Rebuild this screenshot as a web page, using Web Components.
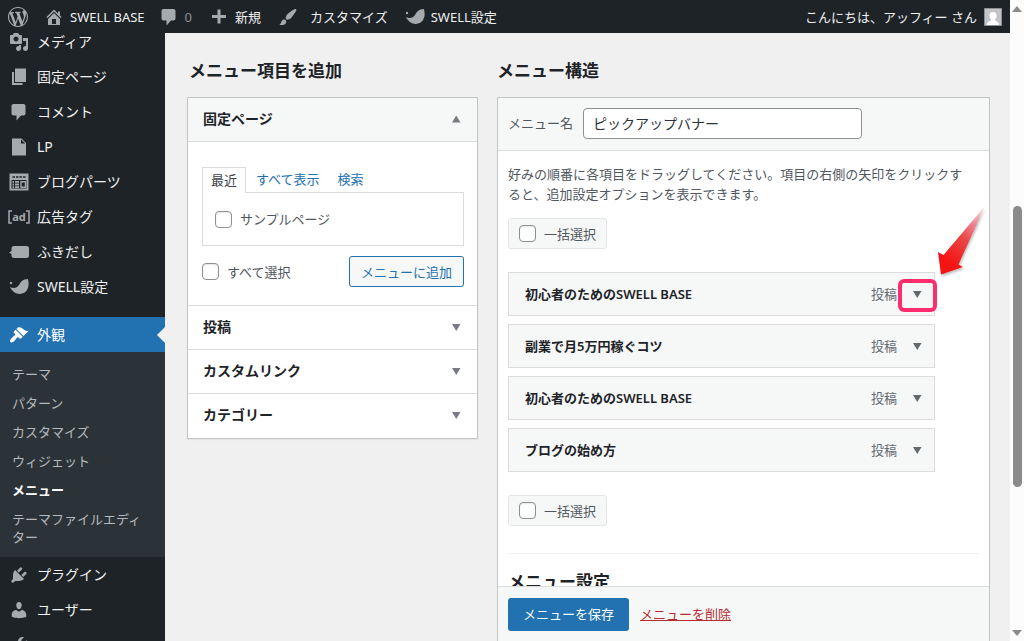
<!DOCTYPE html>
<html lang="ja">
<head>
<meta charset="utf-8">
<title>メニュー</title>
<style>
  html, body { margin: 0; height: 100%; overflow: hidden; }
  body { font: 13px/20px "Noto Sans", "Noto Sans CJK JP", sans-serif; color: #50575e; background: #f0f0f1; }
</style>
</head>
<body>
<admin-page></admin-page>
<script>
const define = (name, html, setup) => {
  const template = document.createElement('template');
  template.innerHTML = `<style>*{box-sizing:border-box}:host{box-sizing:border-box}a{color:inherit;text-decoration:none}button{font:inherit;cursor:pointer}</style>${html}`;
  customElements.define(name, class extends HTMLElement {
    constructor() {
      super();
      this.attachShadow({ mode: 'open' }).append(template.content.cloneNode(true));
    }
    connectedCallback() {
      if (setup) setup(this, this.shadowRoot);
    }
  });
};

const icons = {
  wordpress: '<path d="M20 10c0-5.510-4.490-10-10-10C4.480 0 0 4.490 0 10c0 5.520 4.480 10 10 10 5.510 0 10-4.480 10-10zM7.780 15.370L4.370 6.220c.55-.02 1.170-.08 1.170-.08.5-.06.44-1.130-.06-1.110 0 0-1.450.11-2.370.11-.18 0-.37 0-.58-.01C4.120 2.690 6.870 1.110 10 1.110c2.330 0 4.450.87 6.050 2.340-.68-.11-1.650.39-1.650 1.580 0 .74.45 1.360.9 2.100.35.61.55 1.360.55 2.460 0 1.490-1.400 5-1.400 5l-3.030-8.370c.54-.02.82-.17.82-.17.5-.05.44-1.250-.06-1.220 0 0-1.440.12-2.380.12-.87 0-2.330-.12-2.330-.12-.5-.03-.56 1.200-.06 1.220l.92.08 1.260 3.410zM17.410 10c.24-.64.74-1.870.43-4.250.7 1.290 1.050 2.710 1.050 4.250 0 3.290-1.730 6.240-4.400 7.780.97-2.590 1.940-5.200 2.920-7.780zM6.100 18.090C3.120 16.650 1.110 13.530 1.110 10c0-1.300.23-2.480.72-3.590C3.250 10.300 4.670 14.200 6.100 18.090zM10.130 11.460l2.580 6.980c-.86.29-1.760.45-2.710.45-.79 0-1.570-.11-2.290-.33.81-2.380 1.620-4.740 2.420-7.100z"/>',
  home: '<path d="M16 8.500l1.530 1.530-1.060 1.060L10 4.600l-6.470 6.490-1.060-1.060L10 2.500l4 4v-2h2v4zm-6-2.460l6 5.990V18H4v-5.970zM12 17v-5H8v5h4z"/>',
  comment: '<path d="M5 2h9.500c1.100 0 2 .9 2 2v7.500c0 1.100-.9 2-2 2H12l-4.500 5v-5H4.500c-1.100 0-2-.9-2-2V4c0-1.100.9-2 2-2z"/>',
  plus: '<path d="M17 8v3h-5.500v5.500h-3V11H3V8h5.500V2.500h3V8z"/>',
  brush: '<path d="M18.330 3.570s.27-.8-.31-1.360c-.53-.52-1.220-.24-1.220-.24-.61.3-5.760 3.470-7.670 5.570-.86.96-2.060 3.790-1.090 4.820.92.98 3.960-.17 4.790-1 2.060-2.060 5.210-7.170 5.500-7.790zM1.400 17.650c2.370-1.560 1.460-3.410 3.230-4.640.93-.65 2.220-.62 3.080.29.63.67.8 2.570-.16 3.460-1.570 1.450-4 1.550-6.150.89z"/>',
  bird: '<circle cx="2" cy="6" r="1.200"/><path d="M1 10C4.500 11.800 8 11 10 8 12 4.500 14 2.200 18.800 2 20.500 7 19.600 12 16.500 14.800 12 18.600 4.500 17.500 1 10z"/>',
  media: '<path d="M13 11V4c0-.55-.45-1-1-1h-1.670L9 1H5L3.670 3H2c-.55 0-1 .45-1 1v7c0 .55.45 1 1 1h10c.55 0 1-.45 1-1zM7 4.500c1.380 0 2.500 1.120 2.500 2.500S8.380 9.500 7 9.500 4.500 8.380 4.500 7 5.620 4.500 7 4.500zM14 6h5v10.500c0 1.380-1.120 2.500-2.500 2.500S14 17.880 14 16.500s1.120-2.500 2.500-2.500c.17 0 .34.02.5.05V9h-3V6zm-4 8.050V13h2v3.500c0 1.380-1.120 2.500-2.500 2.500S7 17.880 7 16.500 8.120 14 9.500 14c.17 0 .34.02.5.05z"/>',
  page: '<path d="M6 15V1.500h11V15zm-1 1h8.500v2H3V5h2z"/>',
  file: '<path d="M3 1.500h9.500L17 6v12.500H3zM12 2.500v4h4.200z" fill-rule="evenodd"/>',
  layout: '<path fill-rule="evenodd" d="M.5 1.500h19v17H.5zM2.500 8v8.500h15V8zM3.500 4.200v1.500H6V4.200zm3.500 0v1.500h2.500V4.200zm3.500 0v1.500H13V4.200zm3.500 0v1.500h2.500V4.200z"/><path d="M3.500 9H5v1.800H3.500zM6 9h4v1.800H6zM3.500 11.600H5v1.800H3.500zm2.500 0h4v1.800H6zM3.500 14.200H5V16H3.500zm2.500 0h4V16H6z"/><path d="M12 9.800h4.500v5.500H12z" fill="none" stroke="currentColor" stroke-width="1.400"/>',
  ad: '<path d="M3 4H0v12h3M17 4h3v12h-3" fill="none" stroke="currentColor" stroke-width="1.500"/><text x="10" y="14" text-anchor="middle" font-size="11" font-weight="700">ad</text>',
  balloon: '<path d="M5 4h12.500A2.500 2.500 0 0 1 20 6.500v7a2.500 2.500 0 0 1-2.500 2.500H5a2.500 2.500 0 0 1-2.500-2.500V12L0 10.500 2.500 9V6.500A2.500 2.500 0 0 1 5 4z"/>',
  appearance: '<path d="M14.480 11.060L7.410 3.990l1.500-1.500c.5-.56 2.300-.47 3.510.32 1.210.8 1.430 1.280 2.910 2.100 1.180.64 2.450 1.260 4.450.85zm-.71.71L6.700 4.700 4.930 6.470c-.39.39-.39 1.020 0 1.410l1.060 1.060c.39.39.39 1.030 0 1.420-.6.6-1.430 1.110-2.210 1.690-.35.26-.7.53-1.010.84C1.430 14.230.4 16.080 1.400 17.070c.99 1 2.840-.03 4.180-1.360.31-.31.58-.66.85-1.020.57-.78 1.080-1.610 1.690-2.210.39-.39 1.020-.39 1.410 0l1.060 1.060c.39.39 1.020.39 1.410 0z"/>',
  plugin: '<path d="M13.110 4.360L9.870 7.600 8 5.730l3.240-3.240c.35-.34 1.050-.2 1.560.32.52.51.66 1.210.31 1.550zm-8 1.770l.91-1.120 9.010 9.010-1.190.84c-.71.71-2.630 1.160-3.820 1.160H6.140L4.900 17.260c-.59.59-1.540.59-2.120 0-.59-.58-.59-1.530 0-2.120l1.240-1.240v-3.880c0-1.130.4-3.190 1.090-3.890zm7.260 3.970l3.240-3.240c.34-.35 1.040-.21 1.550.31.52.51.66 1.210.31 1.550l-3.240 3.250z"/>',
  user: '<path d="M10 9.250c-2.270 0-2.730-3.440-2.730-3.440C7 4.020 7.820 2 9.970 2c2.160 0 2.980 2.020 2.710 3.810 0 0-.41 3.440-2.680 3.440zm0 2.570L12.720 10c2.390 0 4.520 2.330 4.520 4.530v2.490s-3.650 1.130-7.240 1.130c-3.650 0-7.240-1.130-7.240-1.130v-2.490c0-2.250 1.940-4.480 4.470-4.480z"/>',
  tools: '<path d="M16.680 9.770c-1.340 1.340-3.300 1.670-4.950.99l-5.410 6.520c-.99.99-2.590.99-3.580 0s-.99-2.590 0-3.570l6.520-5.420c-.68-1.650-.35-3.610.99-4.950 1.280-1.280 3.120-1.620 4.720-1.060l-2.890 2.890 2.820 2.820 2.860-2.870c.53 1.580.18 3.390-1.080 4.650z"/>',
  down: '<path d="M6 7h8.500l-4.250 7z"/>',
  up: '<path d="M6 13.500h8.500l-4.250-7z"/>'
};

define('admin-icon', `<style>:host{display:block;flex:none;width:20px;height:20px}svg{display:block;width:100%;height:100%;fill:currentColor;overflow:visible}</style><svg viewBox="0 0 20 20" aria-hidden="true"></svg>`,
  (host, root) => { root.querySelector('svg').innerHTML = icons[host.getAttribute('name')]; });

const setIcon = (host, root) => {
  const icon = document.createElement('admin-icon');
  icon.setAttribute('name', host.getAttribute('icon'));
  root.querySelector('.ico').replaceChildren(icon);
};

define('bar-item', `<style>
  :host{display:block;color:#f0f0f1}
  a{display:flex;align-items:center;gap:var(--label-gap,6px);height:33px;white-space:nowrap}
  .ico{color:#a7aaad}
</style><a href="#"><span class="ico"></span><slot></slot></a>`, setIcon);

define('top-bar', `<style>
  :host{display:flex;align-items:center;height:33px;padding:0 8px;background:#1d2327;color:#f0f0f1}
  nav{display:flex;flex:1;gap:17px}
  .first{width:19px}
  .comments{margin-left:-3px}
  .count{color:#8c8f94}
  .customize{--label-gap:12px}
  .me{display:flex;align-items:center;gap:7px}
  .me svg{width:18px;height:18px}
</style>
<nav aria-label="ツールバー">
  <bar-item icon="wordpress" class="first"></bar-item>
  <bar-item icon="home">SWELL BASE</bar-item>
  <bar-item icon="comment" class="comments"><span class="count">0</span></bar-item>
  <bar-item icon="plus">新規</bar-item>
  <bar-item icon="brush" class="customize">カスタマイズ</bar-item>
  <bar-item icon="bird">SWELL設定</bar-item>
</nav>
<a class="me" href="#">こんにちは、アッフィー さん
  <svg viewBox="0 0 18 18" aria-hidden="true"><path fill="#c3c4c7" stroke="#8c8f94" d="M.5.5h17v17H.5z"/><path fill="#fff" d="M9 4c2.500 0 3.600 1.600 3.600 3.800 0 1.800-.8 3-1.600 3.800v1c2 .7 3.600 1.500 4.200 4.400H2.800c.6-2.900 2.200-3.700 4.200-4.400v-1C6.200 10.800 5.400 9.600 5.400 7.800 5.400 5.600 6.500 4 9 4z"/></svg>
</a>`);

define('side-item', `<style>
  :host{display:block;color:#f0f0f1;font-size:14px}
  a{display:flex;align-items:center;gap:8px;height:35px;padding-left:9px;white-space:nowrap}
  .ico{color:#a7aaad}
  :host([current]) a{background:#2271b1;color:#fff}
  :host([current]) .ico{color:#fff}
  :host([current]) a::after{content:"";margin-left:auto;border:8px solid transparent;border-right-color:#f0f0f1}
</style><a href="#"><span class="ico"></span><span><slot></slot></span></a>`, setIcon);

define('sub-menu', `<style>
  :host{display:block;background:#2c3338;color:#b4b9be;padding:7px 0 6px}
  ul{list-style:none;margin:0;padding:0}
  a{display:block;padding:6px 12px 5px;line-height:18px}
  .on{color:#fff;font-weight:700}
</style><ul>
<li><a href="#">テーマ</a></li><li><a href="#">パターン</a></li><li><a href="#">カスタマイズ</a></li>
<li><a href="#">ウィジェット</a></li><li><a href="#" class="on" aria-current="page">メニュー</a></li><li><a href="#">テーマファイルエディター</a></li></ul>`);

define('admin-menu', `<style>
  :host{display:block;background:#1d2327;overflow:hidden;min-height:0}
  nav{margin-top:-9px}
  .group{margin-top:13px}
</style><nav aria-label="メインメニュー">
  <side-item icon="media">メディア</side-item>
  <side-item icon="page">固定ページ</side-item>
  <side-item icon="comment">コメント</side-item>
  <side-item icon="file">LP</side-item>
  <side-item icon="layout">ブログパーツ</side-item>
  <side-item icon="ad">広告タグ</side-item>
  <side-item icon="balloon">ふきだし</side-item>
  <side-item icon="bird">SWELL設定</side-item>
  <div class="group"><side-item icon="appearance" current>外観</side-item><sub-menu></sub-menu></div>
  <side-item icon="plugin">プラグイン</side-item>
  <side-item icon="user">ユーザー</side-item>
  <side-item icon="tools"></side-item>
</nav>`);

define('check-field', `<style>
  :host{display:inline-flex}
  label{display:inline-flex;align-items:center;gap:8px}
  input{appearance:none;width:17px;height:17px;margin:0;border:1px solid #8c8f94;border-radius:4px;background:#fff;box-shadow:inset 0 1px 2px rgba(0,0,0,.1)}
  :host([boxed]) label{height:31px;padding:0 10px;border:1px solid #e4e5e6;border-radius:3px;background:#f6f7f7}
</style><label><input type="checkbox"><span><slot></slot></span></label>`);

define('accordion-section', `<style>
  :host{display:block;border-bottom:1px solid #dcdcde}
  :host(:last-of-type){border-bottom-color:#fff}
  h3{margin:0;font-size:14px}
  button{display:flex;align-items:center;justify-content:space-between;width:100%;height:43px;padding:0 11px 2px 15px;border:0;background:#fff;color:#1d2327;font-weight:700}
  :host([open]) button{background:#f6f7f7;border-bottom:1px solid #dcdcde;height:44px}
  admin-icon{color:#787c82}
  .down,.up{display:none}
  :host([open]) .up,:host(:not([open])) .down{display:block}
</style><h3><button type="button"><slot name="title"></slot><admin-icon class="down" name="down"></admin-icon><admin-icon class="up" name="up"></admin-icon></button></h3><slot></slot>`,
  (host, root) => { root.querySelector('button').setAttribute('aria-expanded', host.hasAttribute('open')); });

define('page-picker', `<style>
  :host{display:block;padding:25px 13px 18px 14px}
  .tabs{display:flex;height:26px;margin-bottom:-1px;line-height:25px}
  .tabs a{padding:0 9px;color:#2271b1}
  .tabs a.on{position:relative;padding:0 8px;color:#3c434a;border:1px solid #dcdcde;border-bottom:0;background:#fff}
  .tabs a.on + a{padding-left:10px}
  .box{border:1px solid #dcdcde;height:54px;padding:0 12px;display:flex;align-items:center}
  .actions{display:flex;align-items:center;justify-content:space-between;margin-top:10px}
  button{height:31px;padding:0 11px;border:1px solid #2271b1;border-radius:3px;background:#f6f7f7;color:#2271b1}
</style>
<div class="tabs"><a href="#" class="on">最近</a><a href="#">すべて表示</a><a href="#">検索</a></div>
<div class="box"><check-field>サンプルページ</check-field></div>
<div class="actions"><check-field>すべて選択</check-field><button type="button">メニューに追加</button></div>`);

define('add-panel', `<style>
  :host{display:block}
  h2{margin:0 0 14px 2px;font-size:17px;line-height:24px;color:#1d2327}
  .panel{background:#fff;border:1px solid #c3c4c7;box-shadow:0 1px 1px rgba(0,0,0,.05)}
</style><h2>メニュー項目を追加</h2>
<div class="panel">
  <accordion-section open><span slot="title">固定ページ</span><page-picker></page-picker></accordion-section>
  <accordion-section><span slot="title">投稿</span></accordion-section>
  <accordion-section><span slot="title">カスタムリンク</span></accordion-section>
  <accordion-section><span slot="title">カテゴリー</span></accordion-section>
</div>`);

define('menu-entry', `<style>
  :host{display:flex;align-items:center;position:relative;height:44px;padding:0 7px 0 16px;border:1px solid #dcdcde;background:#f6f7f7}
  strong{flex:1;color:#1d2327;font-weight:600}
  .type{color:#646970}
  button{display:flex;padding:0;margin-left:10px;border:0;background:none;color:#646970}
</style><strong><slot></slot></strong><span class="type">投稿</span><button type="button" aria-label="項目を編集"><admin-icon name="down"></admin-icon></button><slot name="mark"></slot>`);

define('callout-mark', `<style>
  :host{display:block;position:absolute;right:-3px;top:6px;width:39px;height:33px;border:4px solid #ff2d6e;border-radius:6px}
  svg{position:absolute;right:-62px;bottom:28px;width:60px;height:80px;overflow:visible;filter:drop-shadow(1px 2px 1px rgba(0,0,0,.25))}
</style><svg viewBox="0 0 60 80" aria-hidden="true">
  <defs><linearGradient id="fade" gradientUnits="userSpaceOnUse" x1="50" y1="7" x2="12" y2="60"><stop offset="0" stop-color="#f4b8c0" stop-opacity=".35"/><stop offset=".3" stop-color="#ef8792"/><stop offset=".6" stop-color="#ea4444"/><stop offset="1" stop-color="#f51414"/></linearGradient></defs>
  <path fill="url(#fade)" d="M50 6 23.500 64.500 28 67 6 74.500 3 52 8.500 55z"/>
</svg>`);

define('structure-panel', `<style>
  :host{display:flex;flex-direction:column;min-height:0;min-width:0}
  h2,h3{margin:0;font-size:17px;line-height:24px;color:#1d2327}
  h2{margin-bottom:14px}
  .panel{display:flex;flex-direction:column;flex:1;min-height:0;border:1px solid #c3c4c7;border-bottom:0;background:#fff}
  header{display:flex;align-items:center;gap:10px;flex:none;height:53px;padding:0 10px 2px;border-bottom:1px solid #dcdcde;background:#f6f7f7}
  #menu-name{width:279px;height:31px;padding:0 9px;border:1px solid #8c8f94;border-radius:4px;background:#fff;color:#2c3338;font:inherit;font-size:14px}
  .body{flex:1;min-height:0;overflow:hidden;padding:13px 10px 0}
  p{margin:0 0 14px;padding-right:10px}
  .list{display:grid;gap:8px;max-width:427px;margin:23px 0}
  check-field{display:flex;width:max-content}
  hr{margin:27px 0 16px;border:0;border-top:1px solid #f0f0f1}
  footer{display:flex;align-items:center;gap:11px;flex:none;height:55px;padding:0 10px;border-top:1px solid #dcdcde;background:#f6f7f7}
  footer button{height:33px;padding:0 15px;border:0;border-radius:3px;background:#2271b1;color:#fff}
  footer a{color:#b32d2e;text-decoration:underline}
</style><h2>メニュー構造</h2>
<div class="panel">
  <header><label for="menu-name">メニュー名</label><input id="menu-name" type="text" value="ピックアップバナー"></header>
  <div class="body">
    <p>好みの順番に各項目をドラッグしてください。項目の右側の矢印をクリックすると、追加設定オプションを表示できます。</p>
    <check-field boxed>一括選択</check-field>
    <div class="list">
      <menu-entry>初心者のためのSWELL BASE<callout-mark slot="mark"></callout-mark></menu-entry>
      <menu-entry>副業で月5万円稼ぐコツ</menu-entry>
      <menu-entry>初心者のためのSWELL BASE</menu-entry>
      <menu-entry>ブログの始め方</menu-entry>
    </div>
    <check-field boxed>一括選択</check-field>
    <hr>
    <h3>メニュー設定</h3>
  </div>
  <footer><button type="button">メニューを保存</button><a href="#">メニューを削除</a></footer>
</div>`);

define('scroll-track', `<style>
  :host{display:flex;flex-direction:column;align-items:center;background:#fcfcfc;padding:6px 0 5px}
  i{border:5px solid transparent}
  .up{border-top:0;border-bottom:6px solid #8b8b8b}
  .down{border-bottom:0;border-top:6px solid #8b8b8b}
  .rail{flex:1;display:grid;grid-template-rows:194fr 281fr 143fr}
  .thumb{grid-row:2;width:9px;border-radius:5px;background:#8b8b8b}
</style><i class="up"></i><div class="rail"><div class="thumb"></div></div><i class="down"></i>`);

define('admin-page', `<style>
  :host{display:grid;grid-template:33px minmax(0,1fr) / 165px minmax(0,1fr) 14px;height:100vh}
  top-bar{grid-column:1 / 3;z-index:1}
  scroll-track{grid-area:1 / 3 / 3 / 4}
  main{display:grid;grid-template:minmax(0,1fr) / 291px minmax(0,1fr);gap:19px;padding:26px 20px 0 22px;min-height:0;background:#f0f0f1}
</style>
<top-bar></top-bar><admin-menu></admin-menu>
<main><add-panel></add-panel><structure-panel></structure-panel></main>
<scroll-track></scroll-track>`);
</script>
</body>
</html>
